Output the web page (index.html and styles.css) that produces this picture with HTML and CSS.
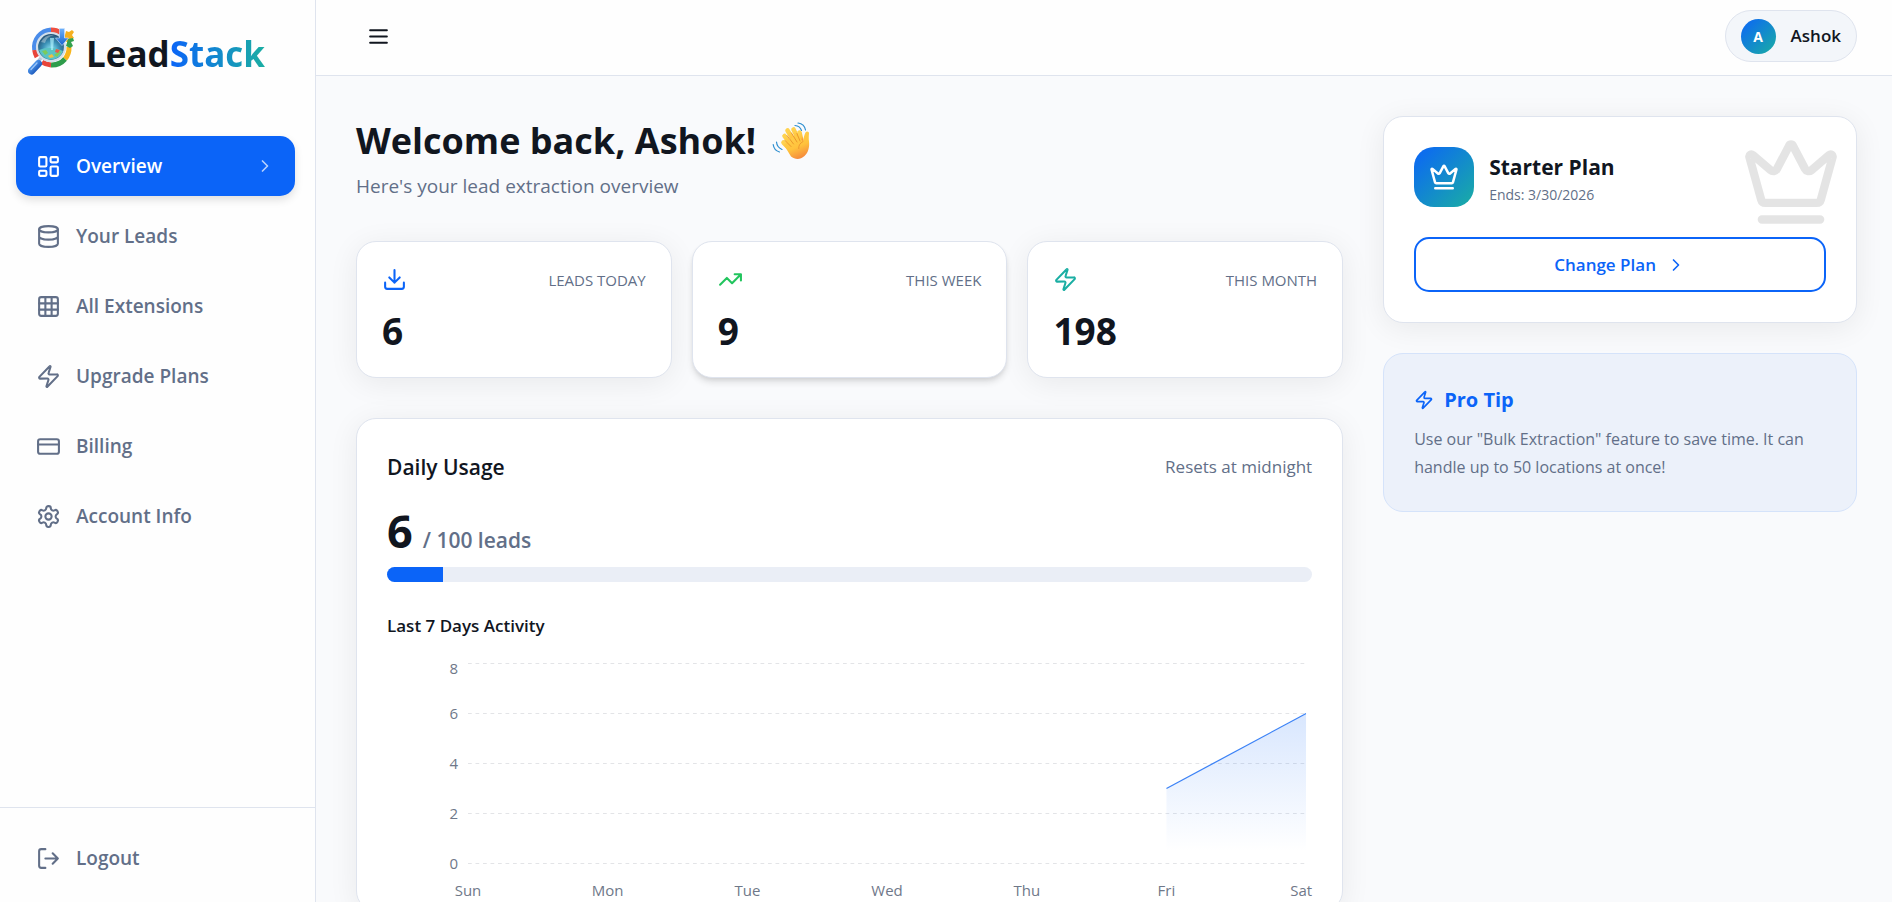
FILE: index.html
```html
<!DOCTYPE html>
<html lang="en">
<head>
<meta charset="utf-8">
<meta name="viewport" content="width=device-width, initial-scale=1">
<title>LeadStack – Overview</title>
<link rel="stylesheet" href="styles.css">
</head>
<body>
<svg class="sprite" aria-hidden="true">
  <symbol id="i-zap" viewBox="0 0 24 24"><path d="M4 14a1 1 0 0 1-.78-1.63l9.9-10.2a.5.5 0 0 1 .86.46l-1.92 6.02A1 1 0 0 0 13 10h7a1 1 0 0 1 .78 1.63l-9.9 10.2a.5.5 0 0 1-.86-.46l1.92-6.02A1 1 0 0 0 11 14z"/></symbol>
  <symbol id="i-crown" viewBox="0 0 24 24"><path d="M11.562 3.266a.5.5 0 0 1 .876 0L15.39 8.87a1 1 0 0 0 1.516.294L21.183 5.5a.5.5 0 0 1 .798.519l-2.834 10.246a1 1 0 0 1-.956.734H5.81a1 1 0 0 1-.957-.734L2.02 6.02a.5.5 0 0 1 .798-.519l4.276 3.664a1 1 0 0 0 1.516-.294zM5 21h14"/></symbol>
  <symbol id="i-chevron" viewBox="0 0 24 24"><path d="m9 18 6-6-6-6"/></symbol>
</svg>
<div class="app">
  <aside class="sidebar">
    <a class="brand" href="#">
      <svg class="brand-mark" viewBox="0 0 48 50" aria-hidden="true">
        <defs>
          <radialGradient id="lens" cx=".5" cy=".6" r=".6"><stop offset="0" stop-color="#8fe9f7"/><stop offset=".5" stop-color="#3a8fb5"/><stop offset="1" stop-color="#21476b"/></radialGradient>
          <linearGradient id="arrow" x2="0" y2="1"><stop stop-color="#6db1fb"/><stop offset="1" stop-color="#1763cf"/></linearGradient>
          <linearGradient id="grip" x2="1" y2="1"><stop stop-color="#5aa2f5"/><stop offset="1" stop-color="#1450b4"/></linearGradient>
        </defs>
        <g fill="none" stroke-width="5">
          <path d="M6.7 24A17.5 17.5 0 0 1 23 4" stroke="#4a8cea"/>
          <path d="M23 4A17.5 17.5 0 0 1 33 7" stroke="#ee4f41"/>
          <path d="M41 21A17.5 17.5 0 0 1 37 33" stroke="#f7b51c"/>
          <path d="M37 33A17.5 17.5 0 0 1 23 39" stroke="#2e9c4b"/>
          <path d="M23 39A17.5 17.5 0 0 1 14 36" stroke="#e8453a"/>
          <path d="M9 31A17.5 17.5 0 0 1 6.7 24" stroke="#e8453a"/>
        </g>
        <path d="M37 9l1-4 3 1 3-2 2 2-2 3 2 3-3 1-2 4-4-2z" fill="#f5b01f"/>
        <path d="M40 13l5-1 1 3-3 1 2 4-3 2-4-2z" fill="#33a14d"/>
        <circle cx="23" cy="21" r="14" fill="url(#lens)" stroke="#d3dfea" stroke-width="2.2"/>
        <path d="M11 24q12-5 24 1-3 8-12 8.500Q14 33 11 24z" fill="#5bc3c4"/>
        <path d="M14 25l4-1 2 3-3 2zM26 29l5-4 2 1-4 5z" fill="#7ccb5b"/>
        <path d="M20 30l4-2 2 3-4 1z" fill="#f0be42"/>
        <path d="M28 23l4 1-2 3-3-1z" fill="#e65d4a"/>
        <path d="M22 12l1 12h2l1-12z" fill="#b5f6ff" opacity=".65"/>
        <path d="M13 16q4-8 13-7-8 2-9 8z" fill="#fff" opacity=".35"/>
        <path d="M31.5 2.500h5V12h4L34 19.500 27.500 12h4z" fill="url(#arrow)" stroke="#cfe3fb" stroke-width=".6"/>
        <path d="M13 32l-4 5" stroke="#b7c6d8" stroke-width="3.5"/>
        <path d="M10.500 37.500L3.500 45" stroke="url(#grip)" stroke-width="7" stroke-linecap="round"/>
        <path d="M9 37l-6 6.500" stroke="#9ac6fa" stroke-width="1.3" stroke-linecap="round"/>
      </svg>
      <span class="brand-name">Lead<span class="brand-accent">Stack</span></span>
    </a>
    <nav class="nav" aria-label="Main">
      <a class="nav-item is-active" href="#" aria-current="page">
        <svg class="icon" viewBox="0 0 24 24"><rect width="7" height="9" x="3" y="3" rx="1"/><rect width="7" height="5" x="14" y="3" rx="1"/><rect width="7" height="9" x="14" y="12" rx="1"/><rect width="7" height="5" x="3" y="16" rx="1"/></svg>
        <span>Overview</span>
        <svg class="icon icon-sm nav-arrow"><use href="#i-chevron"/></svg>
      </a>
      <a class="nav-item" href="#">
        <svg class="icon" viewBox="0 0 24 24"><ellipse cx="12" cy="5" rx="9" ry="3"/><path d="M3 5v14a9 3 0 0 0 18 0V5M3 12a9 3 0 0 0 18 0"/></svg>
        <span>Your Leads</span>
      </a>
      <a class="nav-item" href="#">
        <svg class="icon" viewBox="0 0 24 24"><rect width="18" height="18" x="3" y="3" rx="2"/><path d="M3 9h18M3 15h18M9 3v18M15 3v18"/></svg>
        <span>All Extensions</span>
      </a>
      <a class="nav-item" href="#">
        <svg class="icon"><use href="#i-zap"/></svg>
        <span>Upgrade Plans</span>
      </a>
      <a class="nav-item" href="#">
        <svg class="icon" viewBox="0 0 24 24"><rect width="20" height="14" x="2" y="5" rx="2"/><path d="M2 10h20"/></svg>
        <span>Billing</span>
      </a>
      <a class="nav-item" href="#">
        <svg class="icon" viewBox="0 0 24 24"><path d="M12.220 2h-.44a2 2 0 0 0-2 2v.18a2 2 0 0 1-1 1.730l-.43.25a2 2 0 0 1-2 0l-.15-.08a2 2 0 0 0-2.730.73l-.22.38a2 2 0 0 0 .73 2.730l.15.1a2 2 0 0 1 1 1.720v.51a2 2 0 0 1-1 1.740l-.15.09a2 2 0 0 0-.73 2.730l.22.38a2 2 0 0 0 2.730.73l.15-.08a2 2 0 0 1 2 0l.43.25a2 2 0 0 1 1 1.730V20a2 2 0 0 0 2 2h.44a2 2 0 0 0 2-2v-.18a2 2 0 0 1 1-1.730l.43-.25a2 2 0 0 1 2 0l.15.08a2 2 0 0 0 2.730-.73l.22-.39a2 2 0 0 0-.73-2.730l-.15-.08a2 2 0 0 1-1-1.740v-.5a2 2 0 0 1 1-1.740l.15-.09a2 2 0 0 0 .73-2.730l-.22-.38a2 2 0 0 0-2.730-.73l-.15.08a2 2 0 0 1-2 0l-.43-.25a2 2 0 0 1-1-1.730V4a2 2 0 0 0-2-2z"/><circle cx="12" cy="12" r="3"/></svg>
        <span>Account Info</span>
      </a>
    </nav>
    <div class="sidebar-foot">
      <button class="nav-item" type="button">
        <svg class="icon" viewBox="0 0 24 24"><path d="M9 21H5a2 2 0 0 1-2-2V5a2 2 0 0 1 2-2h4M16 17l5-5-5-5M21 12H9"/></svg>
        <span>Logout</span>
      </button>
    </div>
  </aside>

  <div class="page">
    <header class="topbar">
      <button class="menu-btn" type="button" aria-label="Toggle menu">
        <svg class="icon" viewBox="0 0 24 24"><path d="M4 6h16M4 12h16M4 18h16"/></svg>
      </button>
      <button class="user" type="button"><span class="avatar">A</span><span>Ashok</span></button>
    </header>

    <main class="content">
      <div class="col-main">
        <div class="welcome">
          <h1>Welcome back, Ashok!
            <svg class="wave" viewBox="0 0 38 38" role="img" aria-label="Waving hand">
              <defs><linearGradient id="skin" x1=".2" x2=".6" y2="1"><stop stop-color="#ffd24f"/><stop offset=".6" stop-color="#ffc23c"/><stop offset="1" stop-color="#f58a3c"/></linearGradient></defs>
              <g fill="none" stroke="url(#skin)" stroke-linecap="round" stroke-width="4.6">
                <path d="M12.500 14L22 27"/><path d="M15.500 8.500L25 24"/><path d="M21.500 7.500L28 21"/><path d="M27.500 10.500L30 22"/><path d="M11.500 20.500L20 29"/>
              </g>
              <path d="M12 23L23 13l8 6c.5-2.500 1-5.500 2.500-8.500 1-1.800 3.800-1.200 3.500 1-.2 2.500-.4 4.500 0 8 .6 5-.5 11-4.500 14.500-4.500 4-9.500 3.500-13.500.5z" fill="url(#skin)"/>
              <path d="M15 13.500l6.500 8.500M19.500 11l5.500 9M25 11.500l3 7.500M13 18.500l6 6" fill="none" stroke="#e58b25" stroke-width=".8" stroke-linecap="round"/>
              <path d="M31 19.500c-3 1.500-4.500 4-4.300 7" fill="none" stroke="#ee9a30" stroke-width="1" stroke-linecap="round"/>
              <path d="M23 3.500c3 .2 5.500 2 6.500 5M26 1c4 .5 6.800 3 7.500 7M4.500 20c.3 3.500 2.300 6 5.500 7.500M1.200 22.500C1.700 26.500 4 29 7.500 30" fill="none" stroke="#2f8fd0" stroke-width="1.2" stroke-linecap="round"/>
            </svg>
          </h1>
          <p>Here's your lead extraction overview</p>
        </div>

        <section class="stats" aria-label="Lead totals">
          <article class="card stat">
            <div class="stat-head">
              <svg class="icon c-blue" viewBox="0 0 24 24"><path d="M21 15v4a2 2 0 0 1-2 2H5a2 2 0 0 1-2-2v-4M7 10l5 5 5-5M12 15V3"/></svg>
              <span>LEADS TODAY</span>
            </div>
            <strong>6</strong>
          </article>
          <article class="card stat is-hovered">
            <div class="stat-head">
              <svg class="icon c-green" viewBox="0 0 24 24"><path d="M22 7l-8.500 8.500-5-5L2 17M16 7h6v6"/></svg>
              <span>THIS WEEK</span>
            </div>
            <strong>9</strong>
          </article>
          <article class="card stat">
            <div class="stat-head">
              <svg class="icon c-teal"><use href="#i-zap"/></svg>
              <span>THIS MONTH</span>
            </div>
            <strong>198</strong>
          </article>
        </section>

        <section class="card usage">
          <div class="usage-head">
            <h2>Daily Usage</h2>
            <span>Resets at midnight</span>
          </div>
          <p class="usage-count"><strong>6</strong><span>/ 100 leads</span></p>
          <div class="meter" role="progressbar" aria-label="Daily usage" aria-valuemin="0" aria-valuemax="100" aria-valuenow="6"><div class="meter-fill" style="width: 6%"></div></div>
          <h3>Last 7 Days Activity</h3>
          <svg class="chart" role="img" aria-label="Leads per day, last seven days">
            <defs><linearGradient id="area" x2="0" y2="1"><stop offset=".05" stop-color="#0b64f8" stop-opacity=".15"/><stop offset=".92" stop-color="#0b64f8" stop-opacity="0"/></linearGradient></defs>
            <svg class="plot" x="81" y="13">
              <g class="grid">
                <line x2="100%" y1=".5" y2=".5"/><line x2="100%" y1="50.5" y2="50.5"/><line x2="100%" y1="100.5" y2="100.5"/><line x2="100%" y1="150.5" y2="150.5"/><line x2="100%" y1="200.5" y2="200.5"/>
              </g>
              <svg width="100%" height="201" viewBox="0 0 6 201" preserveAspectRatio="none">
                <path d="M5 125.500L6 50.500V200.500H5z" fill="url(#area)"/>
                <path class="trend" d="M5 125.500L6 50.500"/>
              </svg>
              <g class="axis-y"><text x="-10" y="11">8</text><text x="-10" y="56">6</text><text x="-10" y="106">4</text><text x="-10" y="156">2</text><text x="-10" y="206">0</text></g>
              <g class="axis-x"><text x="0" y="233">Sun</text><text x="16.667%" y="233">Mon</text><text x="33.333%" y="233">Tue</text><text x="50%" y="233">Wed</text><text x="66.667%" y="233">Thu</text><text x="83.333%" y="233">Fri</text><text x="100%" dx="-5" y="233">Sat</text></g>
            </svg>
          </svg>
        </section>
      </div>

      <div class="col-side">
        <section class="card plan">
          <svg class="icon plan-watermark" aria-hidden="true"><use href="#i-crown"/></svg>
          <div class="plan-head">
            <span class="plan-badge"><svg class="icon"><use href="#i-crown"/></svg></span>
            <div>
              <h2>Starter Plan</h2>
              <p>Ends: 3/30/2026</p>
            </div>
          </div>
          <button class="plan-btn" type="button">Change Plan <svg class="icon icon-sm"><use href="#i-chevron"/></svg></button>
        </section>
        <section class="tip">
          <h2><svg class="icon icon-sm"><use href="#i-zap"/></svg>Pro Tip</h2>
          <p>Use our "Bulk Extraction" feature to save time. It can handle up to 50 locations at once!</p>
        </section>
      </div>
    </main>
  </div>
</div>
</body>
</html>
```
FILE: styles.css
```css
:root {
  --blue: #0b64f8;
  --teal: #1aaea3;
  --ink: #11161f;
  --muted: #626f88;
  --line: #dfe4ee;
  --brand: linear-gradient(135deg, var(--blue), var(--teal));
}
* { box-sizing: border-box; margin: 0; }
body {
  font-family: "Open Sans", "Noto Sans", sans-serif;
  font-size: 16px;
  line-height: 28px;
  color: var(--ink);
  background: #f9fafc;
}
button { font: inherit; color: inherit; background: none; border: 0; cursor: pointer; }
a { color: inherit; text-decoration: none; }
.sprite { position: absolute; width: 0; height: 0; }
.icon {
  width: 25px;
  height: 25px;
  flex: none;
  fill: none;
  stroke: currentColor;
  stroke-width: 2;
  stroke-linecap: round;
  stroke-linejoin: round;
}
.icon-sm { width: 20px; height: 20px; }
.c-blue { color: var(--blue); }
.c-green { color: #22c55e; }
.c-teal { color: var(--teal); }

.app { display: flex; height: 100vh; overflow: hidden; }

.sidebar {
  width: 316px;
  flex: none;
  display: flex;
  flex-direction: column;
  background: #fefefe;
  border-right: 1px solid var(--line);
}
.brand { display: flex; align-items: flex-end; gap: 10px; padding: 26px 28px 0; }
.brand-mark { width: 48px; height: 50px; }
.brand-name { font-size: 35px; line-height: 44px; font-weight: 700; }
.brand-accent {
  background: linear-gradient(90deg, var(--blue), var(--teal));
  background-clip: text;
  color: transparent;
}
.nav { display: grid; gap: 10px; padding: 60px 20px 0 16px; }
.nav-item {
  display: flex;
  align-items: center;
  gap: 15px;
  width: 100%;
  height: 60px;
  padding: 0 20px;
  border-radius: 15px;
  font-size: 19px;
  font-weight: 600;
  color: var(--muted);
}
.is-active { background: var(--blue); color: #fff; box-shadow: 0 4px 8px rgba(0, 0, 0, .12); }
.nav-arrow { margin-left: auto; opacity: .7; }
.sidebar-foot { margin-top: auto; padding: 20px 20px 14px 16px; border-top: 1px solid var(--line); }

.page { flex: 1; min-width: 0; display: flex; flex-direction: column; }
.topbar {
  display: flex;
  justify-content: space-between;
  align-items: center;
  padding: 10px 35px 13px 50px;
  background: #fefefe;
  border-bottom: 1px solid var(--line);
}
.menu-btn { display: flex; padding: 0; }
.user {
  display: flex;
  align-items: center;
  gap: 15px;
  height: 52px;
  padding: 0 15px;
  border: 1px solid var(--line);
  border-radius: 26px;
  background: #f3f6fa;
  font-size: 17px;
  font-weight: 600;
}
.avatar {
  width: 35px;
  height: 35px;
  border-radius: 50%;
  background: var(--brand);
  color: #fff;
  font-size: 14px;
  line-height: 35px;
  font-weight: 700;
}

.content {
  flex: 1;
  min-height: 0;
  display: grid;
  grid-template-columns: minmax(0, 25fr) minmax(0, 12fr);
  align-items: start;
  gap: 40px;
  padding: 40px 35px 40px 40px;
  overflow-y: auto;
  scrollbar-width: none;
}
.col-main { display: grid; gap: 40px; }
.col-side { display: grid; gap: 30px; }
.card {
  background: #fff;
  border: 1px solid var(--line);
  border-radius: 20px;
  box-shadow: 0 5px 30px rgba(0, 0, 0, .07);
}

.welcome h1 {
  display: flex;
  align-items: center;
  gap: 16px;
  font-size: 36px;
  line-height: 50px;
  font-weight: 700;
}
.wave { width: 38px; height: 38px; }
.welcome p { margin-top: 5px; font-size: 19px; line-height: 30px; color: var(--muted); }

.stats { display: grid; grid-template-columns: repeat(3, 1fr); gap: 20px; }
.stat { padding: 25px; }
.stat.is-hovered { box-shadow: 0 5px 7px -1px rgba(0, 0, 0, .12), 0 2px 5px -2px rgba(0, 0, 0, .1); }
.stat-head {
  display: flex;
  justify-content: space-between;
  align-items: center;
  height: 25px;
  font-size: 15px;
  color: var(--muted);
}
.stat strong { display: block; margin-top: 17px; font-size: 37px; line-height: 43px; }

.usage { padding: 30px; }
.usage-head { display: flex; justify-content: space-between; align-items: center; height: 35px; }
.usage-head h2 { font-size: 21px; font-weight: 600; }
.usage-head span { font-size: 17px; color: var(--muted); }
.usage-count { display: flex; align-items: baseline; gap: 10px; height: 50px; margin-top: 22px; line-height: 50px; }
.usage-count strong { font-size: 45px; }
.usage-count span { font-size: 21px; font-weight: 600; color: var(--muted); }
.meter { height: 15px; margin: 11px 0 30px; border-radius: 8px; background: #eaeef6; overflow: hidden; }
.meter-fill { height: 100%; background: var(--blue); }
.usage h3 { font-size: 17px; font-weight: 600; }
.chart { display: block; width: 100%; height: 230px; margin-top: 10px; overflow: visible; }
.plot { width: calc(100% - 87px); height: 240px; overflow: visible; }
.grid line { stroke: #e3e4e7; stroke-dasharray: 3.75; }
.trend { fill: none; stroke: #3b82f6; stroke-width: 1.25; vector-effect: non-scaling-stroke; }
.chart text { font-size: 15px; fill: #6f7889; }
.axis-y text { text-anchor: end; }
.axis-x text { text-anchor: middle; }

.plan { position: relative; padding: 30px; }
.plan-watermark { position: absolute; top: 15px; right: 15px; width: 100px; height: 100px; color: #000; opacity: .1; }
.plan-head { display: flex; align-items: center; gap: 15px; }
.plan-badge { display: grid; place-items: center; width: 60px; height: 60px; border-radius: 20px; background: var(--brand); color: #fff; }
.plan-badge .icon { width: 30px; height: 30px; }
.plan h2 { font-size: 21px; line-height: 35px; font-weight: 700; }
.plan p { font-size: 14px; line-height: 20px; color: var(--muted); }
.plan-btn {
  display: flex;
  justify-content: center;
  align-items: center;
  gap: 10px;
  width: 100%;
  height: 55px;
  margin-top: 30px;
  border: 2px solid var(--blue);
  border-radius: 15px;
  font-size: 17px;
  font-weight: 600;
  color: var(--blue);
}
.tip { padding: 30px; border: 1px solid #d5e3fa; border-radius: 20px; background: #ecf1fa; }
.tip h2 { display: flex; align-items: center; gap: 10px; margin-bottom: 10px; font-size: 20px; line-height: 31px; font-weight: 700; color: var(--blue); }
.tip p { font-size: 16px; color: var(--muted); }
```
